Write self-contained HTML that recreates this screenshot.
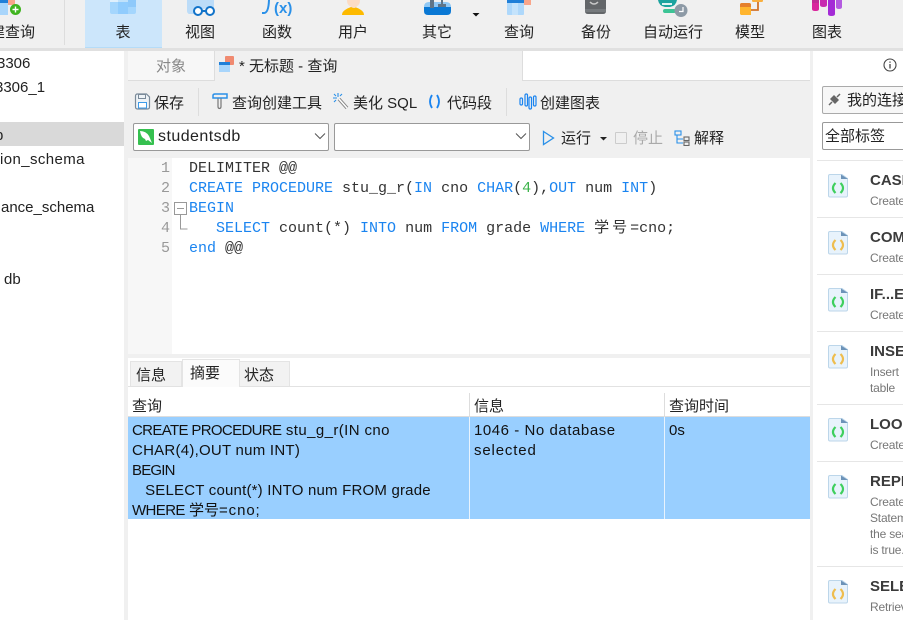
<!DOCTYPE html>
<html><head><meta charset="utf-8">
<style>
html,body{margin:0;padding:0;width:903px;height:620px;overflow:hidden;background:#f0f0f0}
body{position:relative;font:15px "Liberation Sans","Noto Sans CJK SC",sans-serif;color:#222}
#w{position:absolute;left:0;top:0;width:903px;height:620px;overflow:hidden}
.a{position:absolute;white-space:nowrap}
.b{position:absolute}
.tb{position:absolute;top:23px;font-size:15px;line-height:20px;transform:translateX(-50%);color:#222}
.code{position:absolute;left:189px;font:15px/20px "Liberation Mono","Noto Sans CJK SC",monospace;color:#333;white-space:pre}
.k{color:#1a84f0}
.ln{position:absolute;width:40px;left:130px;text-align:right;font:15px/20px "Liberation Mono",monospace;color:#999}
.sum{position:absolute;font-size:15px;line-height:20px;color:#111;white-space:pre}
.sep{position:absolute;left:817px;width:86px;height:1px;background:#e6e6e6}
.t{position:absolute;left:870px;font-size:15px;font-weight:bold;color:#3b3b3b;line-height:18px}
.d{position:absolute;left:870px;font-size:12px;letter-spacing:-.2px;color:#777;line-height:16px;white-space:nowrap}
</style></head><body><div id="w">
<!-- toolbar -->
<div class="b" style="left:0;top:0;width:903px;height:48px;background:#f0f0f0"></div>
<div class="b" style="left:0;top:48px;width:903px;height:3px;background:#e0e0e0"></div>
<div class="b" style="left:85px;top:0;width:77px;height:47px;background:#cce6fb;border-bottom:1px solid #b5dcf8"></div>
<div class="b" style="left:64px;top:0;width:1px;height:45px;background:#ddd"></div>
<svg class="b" style="left:0;top:0" width="903" height="48">
<rect x="0" y="0" width="8" height="3" fill="#1f7fd8"/><rect x="0" y="3" width="8" height="12" fill="#a8d5fb"/><rect x="8" y="0" width="7" height="5" fill="#f9a58a"/>
<circle cx="15.500" cy="9.500" r="5.500" fill="#3fb41f"/><path d="M12.500 9.500h6M15.500 6.500v6" stroke="#fff" stroke-width="1.400"/>
<path d="M110 0h26v12q0 2-2 2h-22q-2 0-2-2z" fill="#a4d6fd"/><rect x="118" y="0" width="10" height="14" fill="#90ccfd"/><rect x="110" y="0" width="8" height="2" fill="#dff0fd"/><rect x="118" y="0" width="10" height="2" fill="#c0e2fb"/><rect x="128" y="0" width="8" height="7" fill="#8ec9fa"/>
<path d="M187 0h27v8h-8l-12 6h-5q-2-1-2-3z" fill="#bcdcf8"/><circle cx="198" cy="11" r="4" fill="#fff" stroke="#1273c9" stroke-width="2"/><circle cx="210" cy="11" r="4" fill="#fff" stroke="#1273c9" stroke-width="2"/><path d="M202 11h4" stroke="#1273c9" stroke-width="2"/>
<path d="M269 0q-.5 13-5 13h-2" fill="none" stroke="#2a90e8" stroke-width="2"/>
<text x="274" y="13" font-size="15" font-family="Liberation Sans" font-weight="bold" fill="#2a90e8">(x)</text>
<path d="M342 15q0-3 3-5 3-2 6-3h4q3 1 6 3 3 2 3 5z" fill="#fdba00"/><path d="M347 0q0 5 3 6 2 2 4 2t3-2q3-1 3-6z" fill="#fcdcc4"/>
<path d="M424 7q0-5 5-5h17q5 0 5 5z" fill="#90c8f4"/><path d="M424 7h27v4q0 4-4 4h-19q-4 0-4-4z" fill="#0a78d4"/><rect x="430" y="0" width="4" height="8" fill="#5f7487"/><rect x="441" y="0" width="2" height="7" fill="#5f7487"/><rect x="438" y="4" width="8" height="3" fill="#5f7487"/>
<path d="M472.500 13h7l-3.500 3.500z" fill="#111"/>
<rect x="507" y="0" width="17" height="15" rx="1" fill="#aed8fb"/><rect x="507" y="0" width="17" height="3" fill="#1f7fd8"/><rect x="512" y="3" width="6" height="12" fill="#c4e3fc"/><rect x="524" y="0" width="7" height="5" fill="#f9a58a"/>
<path d="M585 0h21v11q0 3-3 3h-15q-3 0-3-3z" fill="#636669"/><rect x="585" y="9" width="21" height="3" fill="#767a7d"/><path d="M590 2q4 4 8 0" fill="none" stroke="#c8c8c8" stroke-width="1.500"/>
<path d="M658 0q1 6 7 7h5q6-1 7-7z" fill="#1ba39f"/><rect x="662" y="3" width="10" height="2" fill="#dff3f3"/><rect x="663" y="9" width="13" height="4" rx="2" fill="#3cc495"/><circle cx="681" cy="10.500" r="6.500" fill="#8d9aa6"/><path d="M683 7v4.500h-4" stroke="#fff" stroke-width="1.200" fill="none"/>
<path d="M740 14v-9q0-2 2-2h7q2 0 2 2v10h-10z" fill="#ffb52e"/><path d="M740 7v-2q0-2 2-2h7q2 0 2 2v2z" fill="#e5802d"/><path d="M752 0h11v1q0 1-2 1h-7q-2 0-2-1z" fill="#f9b040"/><path d="M751 10h7V2" stroke="#d2732a" stroke-width="1.800" fill="none"/>
<path d="M812 0h7v9q0 2-3 2h-1q-3 0-3-2z" fill="#d9249c"/><rect x="812" y="0" width="7" height="3" fill="#c02a94"/><path d="M820 0h7v5q0 2-3.500 2t-3.500-2z" fill="#c72bb0"/><path d="M828 0h7v14q0 2-3.500 2t-3.500-2z" fill="#a42bd6"/><path d="M836 0h6v7q0 2-3 2t-3-2z" fill="#b45be0"/>
</svg>
<div class="tb" style="left:-10px;transform:none">建查询</div>
<div class="tb" style="left:123px">表</div>
<div class="tb" style="left:200px">视图</div>
<div class="tb" style="left:277px">函数</div>
<div class="tb" style="left:353px">用户</div>
<div class="tb" style="left:437px">其它</div>
<div class="tb" style="left:519px">查询</div>
<div class="tb" style="left:596px">备份</div>
<div class="tb" style="left:673px">自动运行</div>
<div class="tb" style="left:750px">模型</div>
<div class="tb" style="left:827px">图表</div>

<!-- left tree -->
<div class="b" style="left:0;top:51px;width:124px;height:569px;background:#fff"></div>
<div class="b" style="left:0;top:122px;width:124px;height:24px;background:#d9d9d9"></div>
<div class="a" style="left:-3px;top:54px;line-height:20px">3306</div>
<div class="a" style="left:-5px;top:78px;line-height:20px">3306_1</div>
<div class="a" style="left:-5px;top:126px;line-height:20px">p</div>
<div class="a" style="left:0;top:150px;line-height:20px;letter-spacing:.4px">ion_schema</div>
<div class="a" style="left:1px;top:198px;line-height:20px">ance_schema</div>
<div class="a" style="left:4px;top:270px;line-height:20px">db</div>

<!-- tabs -->
<div class="b" style="left:128px;top:51px;width:86px;height:29px;background:#f7f7f7;border-bottom:1px solid #ddd;border-right:1px solid #ddd"></div>
<div class="a" style="left:156px;top:57px;line-height:20px;color:#888">对象</div>
<div class="b" style="left:215px;top:51px;width:307px;height:30px;background:#f0f0f0"></div>
<div class="b" style="left:522px;top:51px;width:287px;height:29px;background:#fff;border-left:1px solid #ddd;border-bottom:1px solid #ddd"></div>
<svg class="b" style="left:218px;top:55px" width="18" height="18"><rect x="7" y="1" width="9" height="9" rx="1" fill="#f08a70"/><rect x="1" y="7" width="11" height="10" fill="#a8d5fb"/><rect x="1" y="7" width="11" height="3" fill="#1f7fd8"/></svg>
<div class="a" style="left:239px;top:57px;line-height:20px">* 无标题 - 查询</div>

<!-- query toolbar -->
<svg class="b" style="left:134px;top:93px" width="17" height="17"><path d="M1.500 3q0-2 2-2h9l3 3v10q0 2-2 2h-10q-2 0-2-2z" fill="#eef3f7" stroke="#7a8a99" stroke-width="1.200"/><rect x="4.500" y="1.500" width="7" height="4" fill="none" stroke="#7a8a99"/><rect x="4.500" y="9.500" width="8" height="5.500" fill="#fff" stroke="#3d9be9"/></svg>
<div class="a" style="left:154px;top:94px;line-height:20px">保存</div>
<div class="b" style="left:198px;top:88px;width:1px;height:28px;background:#ddd"></div>
<svg class="b" style="left:212px;top:93px" width="16" height="17"><path d="M1 5V2.500Q1 1 3 1h12v4z" fill="none" stroke="#2a90e8" stroke-width="1.500"/><path d="M6 5.500v8q0 2 1.500 2t1.500-2v-8" fill="none" stroke="#777" stroke-width="1.200"/></svg>
<div class="a" style="left:232px;top:94px;line-height:20px">查询创建工具</div>
<svg class="b" style="left:333px;top:93px" width="16" height="17"><path d="M6 6l8 9" stroke="#888" stroke-width="3.500"/><path d="M6 6l8 9" stroke="#fff" stroke-width="1.500"/><path d="M5 0v4M0 5h4M1 1l2 2M9 1L7 3M1 9l2-2" stroke="#2a90e8" stroke-width="1.100"/></svg>
<div class="a" style="left:353px;top:94px;line-height:20px">美化 SQL</div>
<svg class="b" style="left:427px;top:94px" width="16" height="16"><path d="M5 1q-4 6.500 0 13M10 1q4 6.500 0 13" fill="none" stroke="#1a84f0" stroke-width="1.800"/></svg>
<div class="a" style="left:447px;top:94px;line-height:20px">代码段</div>
<div class="b" style="left:506px;top:88px;width:1px;height:28px;background:#ddd"></div>
<svg class="b" style="left:519px;top:93px" width="18" height="17"><g fill="none" stroke="#1a84f0" stroke-width="1.200"><rect x="1" y="5" width="2.500" height="7" rx="1.200"/><rect x="6" y="1" width="2.500" height="12" rx="1.200"/><rect x="10" y="4" width="2.500" height="12" rx="1.200"/><rect x="14.500" y="3" width="2.500" height="10" rx="1.200"/></g></svg>
<div class="a" style="left:540px;top:94px;line-height:20px">创建图表</div>

<!-- selects -->
<div class="b" style="left:133px;top:123px;width:194px;height:26px;background:#fff;border:1px solid #999;border-radius:2px"></div>
<svg class="b" style="left:138px;top:129px" width="16" height="16"><rect width="16" height="16" rx="1" fill="#35c04f"/><path d="M2 2q6 0 9 5l3 7-4-3-2 1-1-2Q3 9 2 2z" fill="#fff"/></svg>
<div class="a" style="left:158px;top:127px;line-height:20px;font-size:16px;letter-spacing:.45px">studentsdb</div>
<svg class="b" style="left:314px;top:132px" width="12" height="8"><path d="M1 1.500l5 5 5-5" fill="none" stroke="#555"/></svg>
<div class="b" style="left:334px;top:123px;width:194px;height:26px;background:#fff;border:1px solid #999;border-radius:2px"></div>
<svg class="b" style="left:515px;top:132px" width="12" height="8"><path d="M1 1.500l5 5 5-5" fill="none" stroke="#555"/></svg>
<svg class="b" style="left:542px;top:130px" width="14" height="17"><path d="M1.500 1.500l10 6.500-10 6.500z" fill="none" stroke="#2a90e8" stroke-width="1.300"/></svg>
<div class="a" style="left:561px;top:129px;line-height:20px">运行</div>
<svg class="b" style="left:600px;top:137px" width="7" height="5"><path d="M0 0h7l-3.500 3.500z" fill="#222"/></svg>
<div class="b" style="left:615px;top:132px;width:10px;height:10px;border:1px solid #ccc;border-radius:1px"></div>
<div class="a" style="left:633px;top:129px;line-height:20px;color:#aaa">停止</div>
<svg class="b" style="left:674px;top:130px" width="17" height="16"><g fill="none" stroke-width="1.100"><rect x="1" y="1" width="6" height="4" stroke="#2a90e8"/><path d="M3 5v8h6M3 9h6" stroke="#2a90e8"/><rect x="10" y="7" width="5" height="3.500" stroke="#666"/><rect x="10" y="12" width="5" height="3.500" stroke="#666"/></g></svg>
<div class="a" style="left:694px;top:129px;line-height:20px">解释</div>

<!-- editor -->
<div class="b" style="left:128px;top:158px;width:682px;height:196px;background:#fff"></div>
<div class="b" style="left:128px;top:158px;width:44px;height:196px;background:#f7f7f7"></div>
<div class="ln" style="top:159px">1</div>
<div class="ln" style="top:179px">2</div>
<div class="ln" style="top:199px">3</div>
<div class="ln" style="top:219px">4</div>
<div class="ln" style="top:239px">5</div>
<svg class="b" style="left:174px;top:202px" width="14" height="30"><rect x="0.500" y="0.500" width="12" height="12" fill="#fff" stroke="#999"/><path d="M3 6.500h7M6.500 13v14h7" fill="none" stroke="#999"/></svg>
<div class="code" style="top:159px">DELIMITER @@</div>
<div class="code" style="top:179px"><span class="k">CREATE PROCEDURE</span> stu_g_r(<span class="k">IN</span> cno <span class="k">CHAR</span>(<span style="color:#3cb34a">4</span>),<span class="k">OUT</span> num <span class="k">INT</span>)</div>
<div class="code k" style="top:199px">BEGIN</div>
<div class="code" style="top:219px">   <span class="k">SELECT</span> count(*) <span class="k">INTO</span> num <span class="k">FROM</span> grade <span class="k">WHERE</span> <span style="letter-spacing:3px">学号</span>=cno;</div>
<div class="code" style="top:239px"><span class="k">end</span> @@</div>

<!-- bottom pane -->
<div class="b" style="left:128px;top:358px;width:682px;height:262px;background:#fff"></div>
<div class="b" style="left:130px;top:361px;width:52px;height:25px;background:#f2f2f2;border:1px solid #e4e4e4;border-bottom:none;box-sizing:border-box"></div>
<div class="b" style="left:182px;top:359px;width:58px;height:28px;background:#fbfbfb;border:1px solid #e4e4e4;border-bottom:none;box-sizing:border-box"></div>
<div class="b" style="left:239px;top:361px;width:51px;height:25px;background:#f2f2f2;border:1px solid #e4e4e4;border-bottom:none;box-sizing:border-box"></div>
<div class="b" style="left:128px;top:386px;width:54px;height:1px;background:#e2e2e2"></div>
<div class="b" style="left:240px;top:386px;width:570px;height:1px;background:#e2e2e2"></div>
<div class="a" style="left:136px;top:366px;line-height:20px">信息</div>
<div class="a" style="left:190px;top:364px;line-height:20px">摘要</div>
<div class="a" style="left:244px;top:366px;line-height:20px">状态</div>
<div class="a" style="left:132px;top:397px;line-height:20px">查询</div>
<div class="a" style="left:474px;top:397px;line-height:20px">信息</div>
<div class="a" style="left:669px;top:397px;line-height:20px">查询时间</div>
<div class="b" style="left:469px;top:393px;width:1px;height:23px;background:#ddd"></div>
<div class="b" style="left:664px;top:393px;width:1px;height:23px;background:#ddd"></div>
<div class="b" style="left:128px;top:416px;width:682px;height:1px;background:#ddd"></div>
<div class="b" style="left:128px;top:417px;width:682px;height:102px;background:#99cfff"></div>
<div class="b" style="left:469px;top:417px;width:1px;height:102px;background:#e8f3fd"></div>
<div class="b" style="left:664px;top:417px;width:1px;height:102px;background:#e8f3fd"></div>
<div class="sum" style="left:132px;top:421px"><span style="letter-spacing:-.65px">CREATE PROCEDURE</span><span style="letter-spacing:.4px"> stu_g_r(IN cno</span>
<span style="letter-spacing:.25px">CHAR(4),OUT num INT)</span>
<span style="letter-spacing:-.8px">BEGIN</span>
<span style="letter-spacing:.2px">   SELECT count(*) INTO num FROM grade</span>
<span style="letter-spacing:-.6px">WHERE</span> 学号<span style="letter-spacing:.9px">=cno;</span></div>
<div class="sum" style="left:474px;top:421px"><span style="letter-spacing:.55px">1046 - No database</span>
<span style="letter-spacing:.85px">selected</span></div>
<div class="sum" style="left:669px;top:421px">0s</div>

<!-- right panel -->
<div class="b" style="left:813px;top:51px;width:90px;height:569px;background:#fff"></div>
<svg class="b" style="left:882px;top:57px" width="16" height="16"><circle cx="8" cy="8" r="6" fill="none" stroke="#444" stroke-width="1.100"/><path d="M8 7v4.500M8 4.500v1.200" stroke="#444" stroke-width="1.300"/></svg>
<div class="b" style="left:822px;top:86px;width:90px;height:26px;background:#f7f7f7;border:1px solid #aaa;border-radius:2px"></div>
<svg class="b" style="left:827px;top:92px" width="15" height="15"><path d="M2 13l3-3M13 2l-3 3" stroke="#666" stroke-width="1.500"/><path d="M3 7l5 5 4-4-5-5z" fill="#666"/></svg>
<div class="a" style="left:847px;top:91px;line-height:20px">我的连接</div>
<div class="b" style="left:822px;top:122px;width:90px;height:26px;background:#fff;border:1px solid #999;border-radius:2px"></div>
<div class="a" style="left:825px;top:127px;line-height:20px">全部标签</div>

<div class="sep" style="top:160px"></div>
<div class="sep" style="top:217px"></div>
<div class="sep" style="top:274px"></div>
<div class="sep" style="top:331px"></div>
<div class="sep" style="top:404px"></div>
<div class="sep" style="top:461px"></div>
<div class="sep" style="top:566px"></div>

<svg width="0" height="0" style="position:absolute"><defs>
<g id="ic"><path d="M0.500 2q0-1.500 1.500-1.500h12l5.500 4v17q0 1.500-1.500 1.500h-16q-1.500 0-1.500-1.500z" fill="#e8f3fc" stroke="#bcd6ea"/><path d="M13 0.500l7 4.500h-7z" fill="#6d93b8"/></g>
</defs></svg>
<svg class="b" style="left:828px;top:174px" width="21" height="25"><use href="#ic"/><path d="M7.500 9q-5 5 0 10M12.500 9q5 5 0 10" fill="none" stroke="#3fcf5e" stroke-width="2.200"/></svg>
<svg class="b" style="left:828px;top:231px" width="21" height="25"><use href="#ic"/><path d="M7.500 9q-5 5 0 10M12.500 9q5 5 0 10" fill="none" stroke="#eebd4e" stroke-width="2.200"/></svg>
<svg class="b" style="left:828px;top:288px" width="21" height="25"><use href="#ic"/><path d="M7.500 9q-5 5 0 10M12.500 9q5 5 0 10" fill="none" stroke="#3fcf5e" stroke-width="2.200"/></svg>
<svg class="b" style="left:828px;top:345px" width="21" height="25"><use href="#ic"/><path d="M7.500 9q-5 5 0 10M12.500 9q5 5 0 10" fill="none" stroke="#eebd4e" stroke-width="2.200"/></svg>
<svg class="b" style="left:828px;top:418px" width="21" height="25"><use href="#ic"/><path d="M7.500 9q-5 5 0 10M12.500 9q5 5 0 10" fill="none" stroke="#3fcf5e" stroke-width="2.200"/></svg>
<svg class="b" style="left:828px;top:475px" width="21" height="25"><use href="#ic"/><path d="M7.500 9q-5 5 0 10M12.500 9q5 5 0 10" fill="none" stroke="#3fcf5e" stroke-width="2.200"/></svg>
<svg class="b" style="left:828px;top:580px" width="21" height="25"><use href="#ic"/><path d="M7.500 9q-5 5 0 10M12.500 9q5 5 0 10" fill="none" stroke="#eebd4e" stroke-width="2.200"/></svg>

<div class="t" style="top:172px">CASE</div><div class="d" style="top:193px">Create</div>
<div class="t" style="top:229px">COMMENT</div><div class="d" style="top:250px">Create</div>
<div class="t" style="top:286px">IF...ELSE</div><div class="d" style="top:307px">Create</div>
<div class="t" style="top:343px">INSERT</div><div class="d" style="top:364px">Insert</div><div class="d" style="top:380px">table</div>
<div class="t" style="top:416px">LOOP</div><div class="d" style="top:437px">Create</div>
<div class="t" style="top:473px">REPEAT</div><div class="d" style="top:494px">Create</div><div class="d" style="top:510px">Statement</div><div class="d" style="top:526px">the search</div><div class="d" style="top:542px">is true.</div>
<div class="t" style="top:578px">SELECT</div><div class="d" style="top:599px">Retrieve</div>
</div></body></html>
